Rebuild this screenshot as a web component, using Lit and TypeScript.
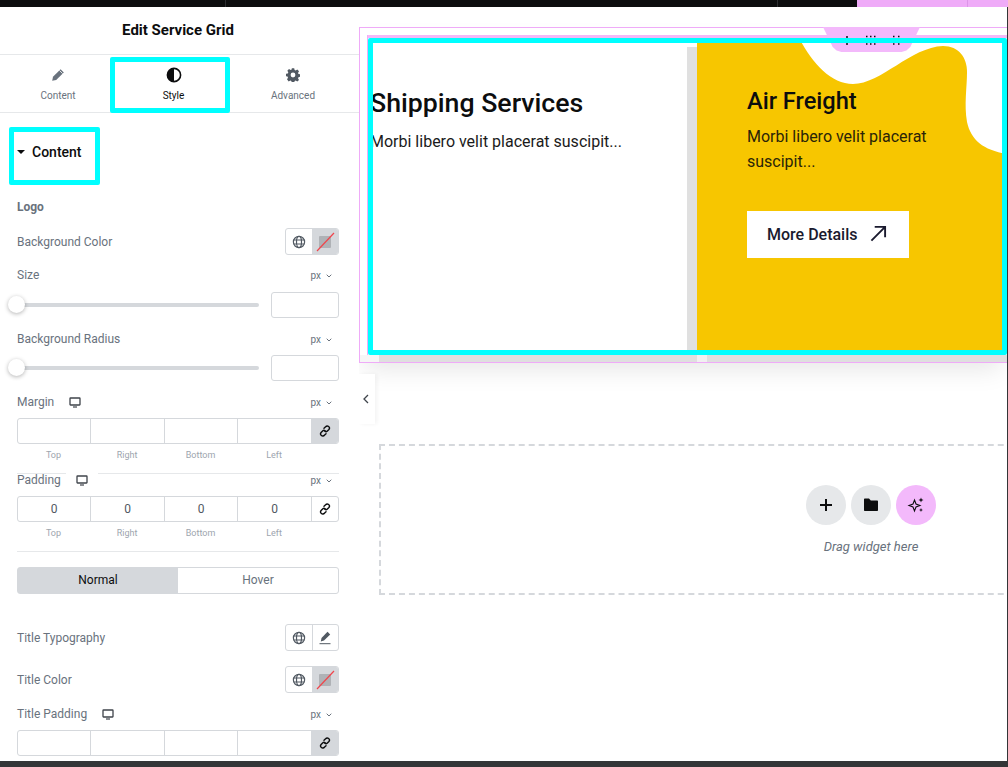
import { LitElement, html, css, svg } from "lit";
import { customElement } from "lit/decorators.js";

const globe = html`<svg class="ico" viewBox="0 0 14 14" width="14" height="14" fill="none" stroke="#515962" stroke-width="1.2">
  <circle cx="7" cy="7" r="5.6" /><ellipse cx="7" cy="7" rx="2.5" ry="5.6" /><path d="M1.6 5h10.8M1.6 9h10.8" />
</svg>`;
const monitor = html`<svg viewBox="0 0 12 11" width="12" height="11" fill="none" stroke="#3f444b">
  <rect x="1" y="1" width="10" height="7" rx=".5" stroke-width="1.3" /><path d="M4 10h4" stroke-width="1.2" />
</svg>`;
const link = html`<svg viewBox="0 0 12 12" width="12" height="12" fill="none" stroke="#0c0d0e" stroke-width="1.4" stroke-linecap="round">
  <path d="M5 3.2 6.6 1.8a2.1 2.1 0 0 1 3.3 2.7L8.4 6a2 2 0 0 1-2.6.2" />
  <path d="M7 8.8 5.4 10.2a2.1 2.1 0 0 1-3.3-2.7L3.6 6a2 2 0 0 1 2.6-.2" />
</svg>`;
const pen = svg`<path d="M9.6 1.2 12.8 4.4 5.2 12 1.2 12.8 2 8.8Z" /><path d="M8.4 2.4 11.6 5.6" stroke="#fff" stroke-width=".8" />`;

@customElement("app-root")
export class AppRoot extends LitElement {
  static styles = css`
    :host {
      display: grid;
      grid-template-rows: 7px 1fr 6px;
      height: 100vh;
      overflow: hidden;
      background: #fff;
      font-family: Roboto, "Liberation Sans", sans-serif;
      color: #69727d;
      font-size: 12px;
    }
    * {
      box-sizing: border-box;
    }
    .top {
      display: flex;
      background: #0c0d0e;
    }
    .top i {
      width: 1px;
      background: #2c2e31;
    }
    .top .a {
      margin-left: 225px;
    }
    .top .b {
      margin-left: 551px;
    }
    .top .p {
      margin-left: 79px;
      flex: 1;
      background: #efabf8;
      display: flex;
      justify-content: flex-end;
    }
    .top .p i {
      margin-right: 40px;
      background: #dd95e8;
    }
    .main {
      display: grid;
      grid-template-columns: 359px 1fr;
      min-height: 0;
      position: relative;
    }
    .bottom {
      background: #333537;
    }

    /* left panel */
    .panel {
      min-height: 0;
      overflow: hidden;
    }
    .title {
      height: 48px;
      border-bottom: 1px solid #e6e8ea;
      display: flex;
      align-items: center;
      justify-content: center;
      font-size: 15px;
      font-weight: 700;
      color: #0c0d0e;
      padding: 0 3px 1px 0;
    }
    .tabs {
      height: 58px;
      border-bottom: 1px solid #e6e8ea;
      display: grid;
      grid-template-columns: 116px 115px 124px;
      position: relative;
    }
    .tab {
      display: flex;
      flex-direction: column;
      align-items: center;
      padding-top: 13px;
      gap: 7px;
      font-size: 10px;
      line-height: 13px;
      color: #69727d;
    }
    .tab svg {
      height: 14px;
      width: 14px;
    }
    .tab .half {
      width: 16px;
      height: 16px;
      margin: -1px 0;
    }
    .tab.on {
      color: #0c0d0e;
    }
    .mark {
      border: 5px solid #00ffff;
      border-radius: 2px;
      position: absolute;
    }
    .mark-tab {
      left: 110px;
      top: 2px;
      width: 120px;
      height: 56px;
    }
    .mark-head {
      left: 9px;
      top: 14px;
      width: 91px;
      height: 58px;
    }
    .body {
      padding: 0 20px 0 17px;
      position: relative;
    }
    .head {
      height: 84px;
      padding-top: 30px;
      display: flex;
      gap: 7px;
      align-items: flex-start;
      font-size: 14px;
      font-weight: 500;
      line-height: 18px;
      color: #0c0d0e;
    }
    .caret {
      width: 0;
      height: 0;
      margin-top: 7px;
      border: 4px solid transparent;
      border-top: 4px solid #0c0d0e;
    }
    .row {
      display: flex;
      align-items: center;
      justify-content: space-between;
    }
    .lab {
      height: 20px;
    }
    .name {
      display: flex;
      align-items: center;
      gap: 15px;
    }
    .ctl {
      height: 26px;
    }
    .ctl.tall {
      height: 27px;
    }
    .group {
      display: flex;
      width: 54px;
      height: 27px;
      border: 1px solid #d5d8dc;
      border-radius: 3px;
      overflow: hidden;
    }
    .group > div {
      flex: 1;
      display: grid;
      place-items: center;
    }
    .group > div + div {
      border-left: 1px solid #d5d8dc;
    }
    .group > .swatch {
      background: #d5d8dc;
      border-left: 0;
    }
    .unit {
      display: flex;
      align-items: center;
      gap: 5px;
      color: #69727d;
      font-size: 10px;
      margin-right: 7px;
    }
    .unit svg {
      margin-top: 1px;
    }
    .track {
      width: 242px;
      height: 4px;
      background: #d5d8dc;
      border-radius: 2px;
      position: relative;
    }
    .knob {
      position: absolute;
      left: -9px;
      top: -7px;
      width: 17px;
      height: 17px;
      border-radius: 50%;
      background: #fff;
      box-shadow: 0 1px 4px rgba(0, 0, 0, 0.3);
    }
    .num {
      width: 68px;
      height: 26px;
      border: 1px solid #d5d8dc;
      border-radius: 3px;
    }
    .dims {
      display: grid;
      grid-template-columns: 72px 74px 73px 74px 1fr;
      height: 26px;
      border: 1px solid #d5d8dc;
      border-radius: 3px;
      overflow: hidden;
      text-align: center;
      line-height: 24px;
      color: #515962;
    }
    .dims > div + div {
      border-left: 1px solid #d5d8dc;
    }
    .dims > .lk {
      display: grid;
      place-items: center;
    }
    .dims > .lk.on {
      background: #d5d8dc;
      border-left: 0;
    }
    .caps {
      display: grid;
      grid-template-columns: 73px 74px 73px 74px 28px;
      text-align: center;
      height: 18px;
      line-height: 18px;
      font-size: 9px;
      color: #9da5ae;
      margin-top: 2px;
    }
    .padrow {
      height: 23px;
      margin-top: 9px;
      border-top: 1px solid #e6e8ea;
      align-items: flex-start;
      line-height: 13px;
    }
    .hole {
      width: 32px;
      margin: -1px 0 0 5px;
      background: #fff;
      height: 14px;
      display: flex;
      justify-content: center;
      padding-top: 2px;
    }
    .plain {
      display: flex;
    }
    .divider {
      height: 1px;
      background: #e6e8ea;
      margin-top: 9px;
    }
    .toggle {
      display: grid;
      grid-template-columns: 160px 1fr;
      height: 27px;
      margin-top: 15px;
      border: 1px solid #d5d8dc;
      border-radius: 3px;
      line-height: 25px;
      text-align: center;
    }
    .toggle .on {
      background: #d5d8dc;
      color: #0c0d0e;
    }
    .m7 { margin-top: 7px; }
    .m6 { margin-top: 6px; }
    .m10 { margin-top: 10px; }
    .m11 { margin-top: 11px; }
    .m15 { margin-top: 15px; }
    .m30 { margin-top: 30px; }
    .bold {
      font-weight: 700;
      font-size: 12px;
    }

    /* canvas */
    .canvas {
      border-right: 1px solid #333537;
      position: relative;
      min-width: 0;
      overflow: hidden;
    }
    .frame {
      margin-top: 20px;
      border-top: 1px solid #efabf8;
      border-left: 1px solid #efabf8;
      border-bottom: 1px solid #efabf8;
      height: 336px;
      padding: 7px 0 0 7px;
      position: relative;
      box-shadow: 0 12px 24px -6px rgba(0, 0, 0, 0.1);
    }
    .inner {
      border-left: 1px solid #efabf8;
      height: 320px;
    }
    .inner::before {
      content: "";
      display: block;
      height: 3px;
      background: #f4b8f8;
    }
    .cards {
      display: grid;
      grid-template-columns: 319px 10px 310px;
      height: 312px;
    }
    .svc {
      padding: 47px 0 0 2px;
      color: #0c0d0e;
    }
    .svc h2 {
      margin: 0;
      font-size: 26.7px;
      font-weight: 500;
      line-height: 36px;
    }
    .svc p {
      margin: 9px 0 0;
      font-size: 16px;
      line-height: 24px;
      color: #1b1b1b;
    }
    .strip {
      background: #e0e0e0;
      margin-top: 9px;
    }
    .yellow {
      background: #f7c600;
      padding: 45px 40px 0 50px;
      position: relative;
      color: #0c0d0e;
    }
    .blob {
      position: absolute;
      left: 102px;
      top: 0;
    }
    .yellow h2 {
      margin: 0;
      font-size: 23.6px;
      font-weight: 500;
      line-height: 36px;
      position: relative;
    }
    .yellow p {
      margin: 5px 0 0;
      font-size: 16px;
      line-height: 25px;
      color: #2a2408;
      position: relative;
    }
    .btn {
      margin-top: 37px;
      width: 162px;
      height: 47px;
      background: #fff;
      display: flex;
      align-items: center;
      padding-left: 20px;
      gap: 13px;
      font-size: 16px;
      font-weight: 500;
      color: #1a1a2e;
    }
    .btn svg {
      margin-bottom: 3px;
    }
    .foot {
      position: absolute;
      left: 0;
      right: 0;
      bottom: 0;
      height: 7px;
      background: linear-gradient(to right, #f6f6f6 19px, #dfdfdf 19px);
    }
    .foot::before {
      content: "";
      display: block;
      margin-left: 337px;
      width: 10px;
      height: 7px;
      background: #f1f0f1;
    }
    .handle {
      position: absolute;
      left: 464px;
      top: 20px;
      width: 97px;
      height: 25px;
      background: #f3b9fb;
      clip-path: polygon(0 0, 100% 0, 90% 80%, 86% 94%, 81% 100%, 19% 100%, 14% 94%, 10% 80%);
    }
    .handle svg {
      display: block;
    }
    .mark-wide {
      left: 9px;
      top: 31px;
      width: 639px;
      height: 317px;
    }
    .collapse {
      position: absolute;
      left: 0;
      top: 367px;
      width: 16px;
      height: 50px;
      padding-right: 2px;
      background: #fff;
      box-shadow: 2px 0 4px rgba(0, 0, 0, 0.05);
      display: grid;
      place-items: center;
    }
    .drop {
      margin: 81px 0 0 20px;
      width: 984px;
      height: 151px;
      border: 2px dashed #d5d8dc;
      display: flex;
      flex-direction: column;
      align-items: center;
      padding-top: 39px;
    }
    .btns {
      display: flex;
      gap: 5px;
    }
    .circle {
      width: 40px;
      height: 40px;
      border-radius: 50%;
      background: #e6e8ea;
      display: grid;
      place-items: center;
    }
    .circle.pink {
      background: #f3b9fb;
    }
    .drag {
      margin-top: 15px;
      font-size: 13px;
      font-style: italic;
      color: #69727d;
      line-height: 14px;
    }
  `;

  private lab(text: string, device = false, cls = "m10") {
    return html`<div class="row lab ${cls}">
      <span class="name">${text}${device ? monitor : ""}</span>
      ${this.unit()}
    </div>`;
  }

  private unit() {
    return html`<span class="unit">px
      <svg viewBox="0 0 6 4" width="6" height="4" fill="none" stroke="#69727d"><path d="M.7.7 3 3 5.3.7" /></svg>
    </span>`;
  }

  private slider(cls: string) {
    return html`<div class="row ctl ${cls}">
      <div class="track"><div class="knob"></div></div>
      <div class="num"></div>
    </div>`;
  }

  private dims(values: string[], linked: boolean) {
    return html`<div class="dims m6">
      ${values.map((v) => html`<div>${v}</div>`)}
      <div class="lk ${linked ? "on" : ""}">${link}</div>
    </div>`;
  }

  private caps() {
    return html`<div class="caps"><span>Top</span><span>Right</span><span>Bottom</span><span>Left</span></div>`;
  }

  private noColor() {
    return html`<div class="swatch">
      <svg viewBox="0 0 26 25" width="26" height="25">
        <rect x="7" y="7" width="12" height="12" rx="1" fill="#afb2b6" />
        <path d="M5 22 22 4" stroke="#f0454c" stroke-width="1.200" />
      </svg>
    </div>`;
  }

  private colorRow(label: string, cls: string) {
    return html`<div class="row ctl tall ${cls}">
      <span>${label}</span>
      <div class="group"><div>${globe}</div>${this.noColor()}</div>
    </div>`;
  }

  render() {
    const empty = ["", "", "", ""];
    return html`
      <div class="top">
        <i class="a"></i><i class="b"></i>
        <div class="p"><i></i></div>
      </div>
      <div class="main">
        <div class="panel">
          <div class="title">Edit Service Grid</div>
          <div class="tabs">
            <div class="tab">
              <svg viewBox="0 0 14 14" fill="#69727d">${pen}</svg>
              Content
            </div>
            <div class="tab on">
              <svg class="half" viewBox="0 0 16 16">
                <circle cx="8" cy="8" r="6.6" fill="none" stroke="#0c0d0e" stroke-width="1.6" />
                <path d="M8 1.400a6.600 6.600 0 0 0 0 13.200Z" fill="#0c0d0e" />
              </svg>
              Style
            </div>
            <div class="tab">
              <svg viewBox="0 0 14 14" fill="#515962">
                <path fill-rule="evenodd" d="M5.800.5h2.400l.4 1.800 1.100.5 1.600-1 1.700 1.700-1 1.600.5 1.100 1.800.4v2.400l-1.800.4-.5 1.100 1 1.600-1.700 1.700-1.600-1-1.100.5-.4 1.800H5.800l-.4-1.800-1.100-.5-1.600 1L1 11.500l1-1.600-.5-1.100L0 8.400V6l1.800-.4.500-1.100-1-1.600L3 1.200l1.600 1 1.100-.5ZM7 4.800a2.400 2.400 0 1 0 0 4.800 2.400 2.400 0 0 0 0-4.800Z" transform="translate(0 -.200)" />
              </svg>
              Advanced
            </div>
            <div class="mark mark-tab"></div>
          </div>
          <div class="body">
            <div class="mark mark-head"></div>
            <div class="head"><span class="caret"></span>Content</div>
            <div class="row lab bold"><span>Logo</span></div>
            ${this.colorRow("Background Color", "m11")}
            ${this.lab("Size")}
            ${this.slider("m7")}
            ${this.lab("Background Radius", false, "m11")}
            ${this.slider("m6")}
            ${this.lab("Margin", true, "m11")}
            ${this.dims(empty, true)}
            ${this.caps()}
            <div class="row padrow">
              <span class="plain">Padding<span class="hole">${monitor}</span></span>
              ${this.unit()}
            </div>
            <div class="dims">
              ${["0", "0", "0", "0"].map((v) => html`<div>${v}</div>`)}
              <div class="lk">${link}</div>
            </div>
            ${this.caps()}
            <div class="divider"></div>
            <div class="toggle"><div class="on">Normal</div><div>Hover</div></div>
            <div class="row ctl tall m30">
              <span>Title Typography</span>
              <div class="group">
                <div>${globe}</div>
                <div>
                  <svg viewBox="0 0 14 14" width="14" height="14" fill="#515962">
                    <path d="M9.500.8 12.200 3.500 6 9.600 2.800 10.400 3.500 7.100Z" />
                    <path d="M1.500 12.700h11" stroke="#515962" stroke-width="1" />
                  </svg>
                </div>
              </div>
            </div>
            ${this.colorRow("Title Color", "m15")}
            ${this.lab("Title Padding", true, "m11")}
            ${this.dims(empty, true)}
          </div>
        </div>
        <div class="canvas">
          <div class="frame">
            <div class="inner">
              <div class="cards">
                <div class="svc">
                  <h2>Shipping Services</h2>
                  <p>Morbi libero velit placerat suscipit...</p>
                </div>
                <div class="strip"></div>
                <div class="yellow">
                  <svg class="blob" viewBox="0 0 208 116" width="208" height="116" fill="#fff">
                    <path d="M0 0C14 26 32 46 54 46 82 46 112 9 144 8 160 8 168 20 168 34 168 50 165 66 168 84 172 102 184 112 208 116V0Z" />
                  </svg>
                  <h2>Air Freight</h2>
                  <p>Morbi libero velit placerat suscipit...</p>
                  <div class="btn">
                    More Details
                    <svg viewBox="0 0 18 18" width="17" height="17" fill="none" stroke="#1a1a2e" stroke-width="2">
                      <path d="M1.500 16.500 16 2M5 2h11v11" />
                    </svg>
                  </div>
                </div>
              </div>
            </div>
            <div class="foot"></div>
          </div>
          <div class="handle">
            <svg viewBox="0 0 97 25" width="97" height="25" fill="none" stroke="#0c0d0e" stroke-width="1.500">
              <path d="M24 9v9" />
              <path d="M43 9.500h1.500M47 9.500h1.500M51 9.500h1.500M43 17h1.500M47 17h1.500M51 17h1.500" />
              <path d="M70 9.500h1.500M75 9.500h1.500M70 17h1.500M75 17h1.500" />
            </svg>
          </div>
          <div class="mark mark-wide"></div>
          <div class="collapse">
            <svg viewBox="0 0 6 10" width="6" height="10" fill="none" stroke="#3f444b" stroke-width="1.300"><path d="M5 1 1 5l4 4" /></svg>
          </div>
          <div class="drop">
            <div class="btns">
              <div class="circle">
                <svg viewBox="0 0 14 14" width="14" height="14" stroke="#0c0d0e" stroke-width="2"><path d="M7 1v12M1 7h12" /></svg>
              </div>
              <div class="circle">
                <svg viewBox="0 0 16 14" width="16" height="14" fill="#0c0d0e"><path d="M1 1.500C1 .9 1.400.5 2 .5h4l1.800 2H14c.6 0 1 .4 1 1V12c0 .6-.4 1-1 1H2c-.6 0-1-.4-1-1Z" /></svg>
              </div>
              <div class="circle pink">
                <svg viewBox="0 0 18 18" width="18" height="18" fill="none" stroke="#0c0d0e" stroke-width="1.100">
                  <path d="M7.500 4 9 8 13 9.500 9 11 7.500 15 6 11 2 9.500 6 8Z" />
                  <path d="M14 1.500 14.700 3.300 16.500 4 14.700 4.700 14 6.500 13.300 4.700 11.500 4 13.300 3.300ZM14 12 14.600 13.400 16 14 14.600 14.600 14 16 13.400 14.600 12 14 13.400 13.400Z" fill="#0c0d0e" stroke="none" />
                </svg>
              </div>
            </div>
            <div class="drag">Drag widget here</div>
          </div>
        </div>
      </div>
      <div class="bottom"></div>
    `;
  }
}
